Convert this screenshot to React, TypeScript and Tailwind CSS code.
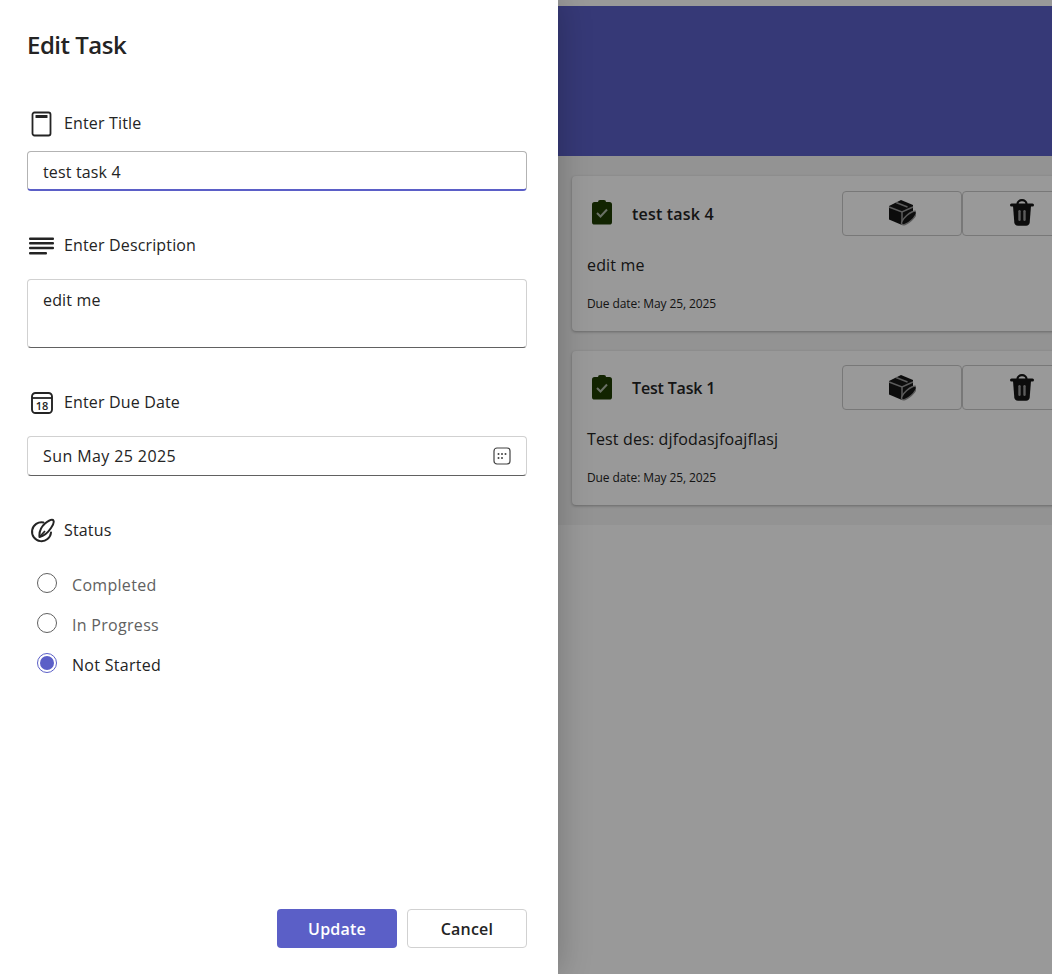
import React from "react";

const Clip = () => (
  <svg width="24" height="28" viewBox="0 0 24 28" className="shrink-0">
    <rect x="8" y="1" width="8" height="5" rx="2" fill="#1f3d02" />
    <rect x="2" y="3" width="20" height="22.500" rx="2.600" fill="#1f3d02" />
    <path d="M7 14l3.500 3.500 6.500-7" fill="none" stroke="#b0bba8" strokeWidth="2" />
  </svg>
);
const BoxEdit = () => (
  <svg width="28" height="28" viewBox="0 0 28 28">
    <path d="M13 1l12 5v9L14 26 1 20.500V7z" fill="#151515" />
    <path d="M1 8l13 5 11-5M14 13v12M8 3.500l11.500 4.500" fill="none" stroke="#999" strokeWidth="1.500" />
    <ellipse cx="21" cy="19" rx="9.500" ry="3.400" transform="rotate(-42 21 19)" fill="#151515" stroke="#999" strokeWidth="1.500" />
  </svg>
);
const Trash = () => (
  <svg width="26" height="28" viewBox="0 0 26 28">
    <path d="M8.500 5C8.500 2.800 10.500 1.200 13 1.200s4.500 1.600 4.500 3.800" fill="none" stroke="#151515" strokeWidth="2.200" />
    <rect x="1" y="4.500" width="24" height="3" rx="1.500" fill="#151515" />
    <path d="M4 7h18l-1.300 16.500c-.2 1.900-1.500 3.300-3.500 3.300H8.800c-2 0-3.300-1.400-3.500-3.300z" fill="#151515" />
    <rect x="9.300" y="11" width="2.400" height="11" rx="1.200" fill="#999" />
    <rect x="14.300" y="11" width="2.400" height="11" rx="1.200" fill="#999" />
  </svg>
);
const TitleIcon = () => (
  <svg width="24" height="28" viewBox="0 0 24 28" className="shrink-0">
    <rect x="3.500" y="3.500" width="18" height="23" rx="2" fill="none" stroke="#242424" strokeWidth="1.800" />
    <rect x="6.500" y="6" width="12" height="3" rx=".5" fill="#242424" />
  </svg>
);
const DescIcon = () => (
  <svg width="28" height="22" viewBox="0 0 28 22" className="shrink-0">
    <g fill="#242424">
      <rect x="0" y="3.500" width="25" height="2.600" rx="1" />
      <rect x="0" y="8" width="25" height="2.600" rx="1" />
      <rect x="0" y="12.700" width="25" height="2.600" rx="1" />
      <rect x="0" y="18" width="18" height="2.600" rx="1" />
    </g>
  </svg>
);
const CalIcon = () => (
  <svg width="24" height="24" viewBox="0 0 24 24" className="shrink-0">
    <rect x="3" y="3" width="20" height="20" rx="3.500" fill="none" stroke="#242424" strokeWidth="1.900" />
    <path d="M3 8h20" stroke="#242424" strokeWidth="1.800" />
    <text x="13" y="20" textAnchor="middle" fontSize="11" fontWeight="600" letterSpacing="0" fill="#242424" fontFamily="Open Sans, sans-serif">18</text>
  </svg>
);
const StatusIcon = () => (
  <svg width="26" height="26" viewBox="0 0 26 26" className="shrink-0">
    <path d="M14.500 5.400A9.500 9.500 0 1 0 22 15.500" fill="none" stroke="#242424" strokeWidth="2" strokeLinecap="round" />
    <path d="M10.500 20C10 15 12 10 16 6.500 19 4 22 2 24 3 25.500 4.500 24.500 7.500 22 11 19 15.500 15 19 10.500 20z" fill="none" stroke="#242424" strokeWidth="2" strokeLinejoin="round" />
    <path d="M10.500 20l5.500-6" stroke="#242424" strokeWidth="1.800" />
  </svg>
);
const DateBtn = () => (
  <svg width="20" height="20" viewBox="0 0 20 20" className="shrink-0">
    <rect x="2" y="2" width="16" height="16" rx="3" fill="none" stroke="#424242" strokeWidth="1.200" />
    <g fill="#424242">
      <circle cx="6.500" cy="8" r="1" /><circle cx="10" cy="8" r="1" /><circle cx="13.500" cy="8" r="1" />
      <circle cx="6.500" cy="12" r="1" /><circle cx="10" cy="12" r="1" />
    </g>
  </svg>
);

function Card({ title, desc, titleCls }: { title: string; desc: string; titleCls: string }) {
  return (
    <div className="w-[560px] shrink-0 h-[154.500px] rounded bg-white shadow-[0_1px_3px_rgba(0,0,0,0.3)] pt-[14.500px] px-[15px]">
      <div className="flex items-center h-[45px]">
        <div className="w-[45px] flex pl-[3px]"><Clip /></div>
        <div className={"w-[210px] pt-[1px] font-semibold text-[#242424] " + titleCls}>{title}</div>
        <button className="w-[120px] h-[45px] rounded border border-[#c8c8c8] flex items-center justify-center"><BoxEdit /></button>
        <button className="w-[120px] h-[45px] rounded border border-[#c8c8c8] flex items-center justify-center"><Trash /></button>
      </div>
      <div className="mt-[17.250px] leading-[24px] text-[#242424]">{desc}</div>
      <div className="mt-[18.750px] text-xs leading-[16px] text-[#242424] tracking-[-0.1px]">Due date: May 25, 2025</div>
    </div>
  );
}

function Label({ icon, text, cls }: { icon: React.ReactNode; text: string; cls: string }) {
  return (
    <div className={"flex items-center h-[28px] " + cls}>
      <div className="w-[37px] pl-[2px] flex items-center">{icon}</div>
      <span className="text-[#242424]">{text}</span>
    </div>
  );
}

function Radio({ text, on }: { text: string; on?: boolean }) {
  return (
    <div className="flex items-center h-[40px] pl-[10px]">
      <span className={"w-5 h-5 rounded-full border flex items-center justify-center -mt-1 " + (on ? "border-[#5b5fc7]" : "border-[#616161]")}>
        {on && <span className="w-3.5 h-3.5 rounded-full bg-[#5b5fc7]" />}
      </span>
      <span className={"ml-[15px] tracking-[0.3px] " + (on ? "text-[#242424]" : "text-[#616161]")}>{text}</span>
    </div>
  );
}

export default function App() {
  return (
    <div className="relative h-[974px] w-[1052px] overflow-hidden bg-white [font-family:'Open_Sans',sans-serif] tracking-[0.15px] text-base">
      <div className="pt-[6px]">
        <div className="h-[150px] bg-[#5b5fc7]" />
        <div className="bg-[#f5f5f5] pl-[572px] py-5 flex flex-col gap-5 overflow-hidden">
          <Card title="test task 4" desc="edit me" titleCls="tracking-[0.2px]" />
          <Card title="Test Task 1" desc="Test des: djfodasjfoajflasj" titleCls="tracking-[-0.16px]" />
        </div>
      </div>
      <div className="absolute inset-0 bg-black/40" />
      <aside className="absolute left-0 top-0 bottom-0 w-[558px] bg-white shadow-[0_0_32px_rgba(0,0,0,0.24)] flex flex-col px-[27px]">
        <h1 className="mt-[27px] h-[36px] leading-[36px] text-2xl font-semibold text-[#242424] tracking-[-0.5px]">Edit Task</h1>
        <Label cls="mt-[46px]" icon={<TitleIcon />} text="Enter Title" />
        <div className="mt-[14px] h-[40px] w-[500px] rounded border border-[#b3b3b3] border-b-2 border-b-[#5b5fc7] pl-[15px] pt-[2px] flex items-center text-[#242424]">test task 4</div>
        <Label cls="mt-[40px]" icon={<DescIcon />} text="Enter Description" />
        <div className="mt-[20px] h-[69px] w-[500px] rounded border border-[#d1d1d1] border-b-[#616161] pl-[15px] pt-[8px] text-[#242424] leading-[24px]">edit me</div>
        <Label cls="mt-[40px]" icon={<CalIcon />} text="Enter Due Date" />
        <div className="mt-[20px] h-[40px] w-[500px] rounded border border-[#d1d1d1] border-b-[#616161] pl-[15px] pr-[14px] flex items-center justify-between text-[#242424] tracking-[0.4px]">Sun May 25 2025<DateBtn /></div>
        <Label cls="mt-[40px]" icon={<StatusIcon />} text="Status" />
        <div className="mt-[21px] flex flex-col">
          <Radio text="Completed" />
          <Radio text="In Progress" />
          <Radio text="Not Started" on />
        </div>
        <div className="mt-auto mb-[26px] w-[500px] flex justify-end gap-[10px]">
          <button className="w-[120px] h-[39px] rounded bg-[#5b5fc7] text-white font-semibold tracking-[0.2px]">Update</button>
          <button className="w-[120px] h-[39px] rounded border border-[#d1d1d1] text-[#242424] font-semibold tracking-[0.2px]">Cancel</button>
        </div>
      </aside>
    </div>
  );
}
